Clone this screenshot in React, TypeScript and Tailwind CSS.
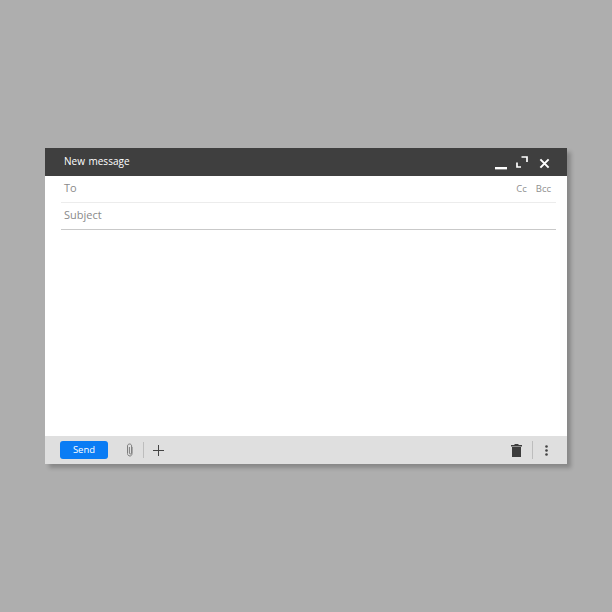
export default function App() {
  return (
    <div className="w-[612px] h-[612px] bg-[#aeaeae] flex justify-center pt-[148px] font-['Open_Sans',sans-serif] antialiased">
      <div className="w-[522px] h-[316px] flex flex-col bg-white shadow-[4px_4px_4px_rgba(0,0,0,0.22)]">
        <div className="h-[28px] bg-[#3f3f3f] flex items-center pl-[19px] pr-[17px] text-white">
          <span className="text-[10px] [word-spacing:1px] mt-[-1px]">New message</span>
          <div className="ml-auto flex items-center">
            <svg width="12" height="13" viewBox="0 0 12 13" className="mt-[3px]"><rect x="0" y="10" width="12" height="2.4" fill="#fff" /></svg>
            <svg width="12" height="12" viewBox="0 0 12 12" fill="none" stroke="#fff" strokeWidth="1.7" className="ml-[9px]">
              <path d="M5.5 1H11V6" />
              <path d="M1 6.5V11H5" />
            </svg>
            <svg width="11" height="11" viewBox="0 0 12 12" fill="none" stroke="#fff" strokeWidth="2.2" className="ml-[11px] mt-[2px]">
              <path d="M1.5 1.5L10.5 10.5M10.5 1.5L1.5 10.5" />
            </svg>
          </div>
        </div>
        <div className="flex-1 flex flex-col pl-[16px] pr-[11px]">
          <div className="h-[27px] border-b border-[#ececec] flex items-center pl-[3px] text-[#8a8a8a]">
            <span className="text-[11px] mt-[-2px]">To</span>
            <div className="ml-auto flex gap-[9px] pr-[5px] text-[9.5px] text-[#8f8f8f]">
              <span>Cc</span>
              <span>Bcc</span>
            </div>
          </div>
          <div className="h-[27px] border-b border-[#c9c9c9] flex items-center pl-[3px] text-[#8a8a8a]">
            <span className="text-[11px] mt-[-2px]">Subject</span>
          </div>
        </div>
        <div className="h-[28px] bg-[#dfdfdf] flex items-center pl-[15px] pr-[16px]">
          <button className="w-[48px] h-[18px] rounded-[3px] bg-[#0a7cf4] text-white text-[9.5px] flex items-center justify-center">Send</button>
          <svg width="8" height="14" viewBox="0 0 8 14" fill="none" stroke="#7d7d7d" strokeWidth="1" className="ml-[18px]">
            <path d="M6 4V10.5C6 12 5.2 13 4 13C2.6 13 1.5 12 1.5 10.5V3C1.5 1.8 2.4 1 3.6 1C4.8 1 5.6 1.8 5.6 3V10C5.6 10.6 5 11 4.4 11C3.8 11 3.4 10.6 3.4 10V4" />
          </svg>
          <div className="w-px h-[16px] bg-[#bdbdbd] ml-[9px]" />
          <svg width="11" height="11" viewBox="0 0 11 11" stroke="#444" strokeWidth="1" className="ml-[9px]">
            <path d="M5.5 0V11M0 5.5H11" />
          </svg>
          <svg width="11" height="13" viewBox="0 0 11 13" fill="#3c3c3c" className="ml-auto">
            <rect x="0" y="1" width="11" height="1.5" />
            <rect x="3.5" y="0" width="4" height="1" />
            <path d="M1 3H10V13H1Z" />
          </svg>
          <div className="w-px h-[18px] bg-[#bdbdbd] ml-[10px]" />
          <svg width="3" height="11" viewBox="0 0 3 11" fill="#444" className="ml-[12px] mr-[3px]">
            <circle cx="1.5" cy="1.5" r="1.3" />
            <circle cx="1.5" cy="5.5" r="1.3" />
            <circle cx="1.5" cy="9.5" r="1.3" />
          </svg>
        </div>
      </div>
    </div>
  );
}
